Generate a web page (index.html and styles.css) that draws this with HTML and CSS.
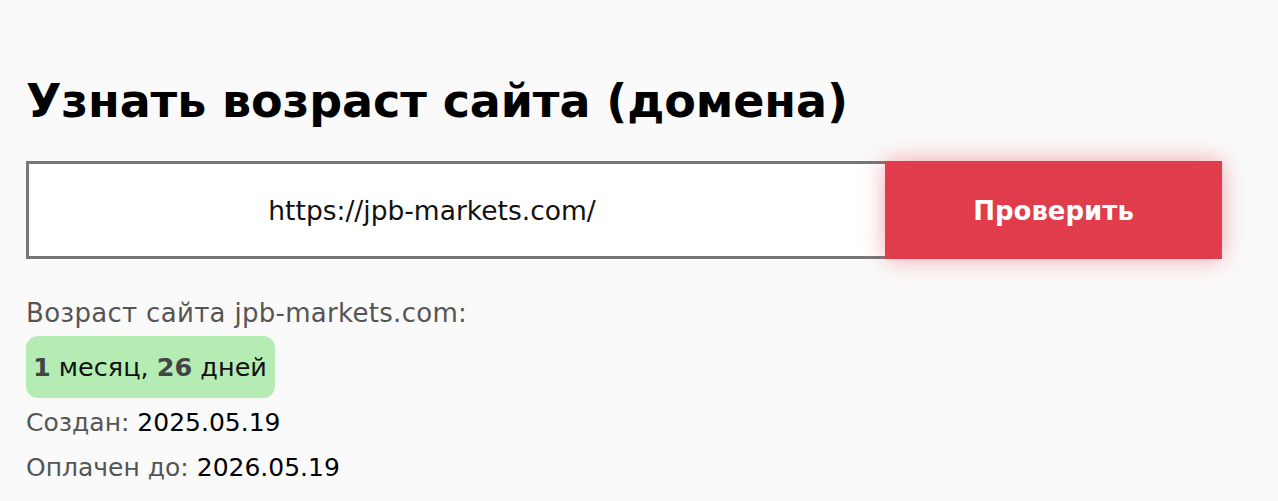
FILE: index.html
```html
<!DOCTYPE html>
<html lang="ru">
<head>
<meta charset="utf-8">
<link rel="stylesheet" href="styles.css">
</head>
<body>
<main class="page">
  <h1 class="title">Узнать возраст сайта (домена)</h1>
  <form class="check">
    <div class="field">https://jpb-markets.com/</div>
    <button class="btn" type="button">Проверить</button>
  </form>
  <div class="result">
    <div class="label-line">Возраст сайта jpb-markets.com:</div>
    <div class="badge"><b>1</b> месяц, <b>26</b> дней</div>
    <div class="row"><span class="muted">Создан:</span> 2025.05.19</div>
    <div class="row"><span class="muted">Оплачен до:</span> 2026.05.19</div>
  </div>
</main>
</body>
</html>
```
FILE: styles.css
```css
html, body {
  margin: 0;
  padding: 0;
  background: #fafafa;
}
body {
  font-family: "DejaVu Sans", "Noto Sans", sans-serif;
  color: #000;
}
.page {
  padding: 72px 56px 0 26px;
}
.title {
  margin: 0;
  font-size: 46px;
  line-height: 58px;
  font-weight: 700;
  letter-spacing: -0.1px;
}
.check {
  display: flex;
  margin-top: 31px;
  width: 1196px;
  height: 98px;
}
.field {
  flex: 1;
  box-sizing: border-box;
  border: 3px solid #777;
  border-right: none;
  background: #fff;
  display: flex;
  align-items: center;
  justify-content: center;
  padding-right: 50px;
  font-size: 26.5px;
  color: #111;
}
.btn {
  width: 337px;
  border: none;
  background: #e03c4c;
  color: #fff;
  font-family: inherit;
  font-size: 26px;
  font-weight: 700;
  padding: 2px 0 0 0;
  box-shadow: 0 0 22px rgba(240, 60, 70, 0.45);
}
.result {
  margin-top: 38px;
  font-size: 25px;
}
.label-line {
  color: #555;
  line-height: 32px;
  font-size: 26px;
  letter-spacing: 0.3px;
}
.badge {
  display: inline-block;
  margin: 7px 0 2px;
  background: #b4ecb4;
  border-radius: 12px;
  padding: 0 8px 0 7px;
  line-height: 62px;
  font-size: 25.5px;
  color: #111;
}
.badge b {
  color: #444;
}
.row {
  line-height: 45px;
}
.muted {
  color: #555;
}
```
